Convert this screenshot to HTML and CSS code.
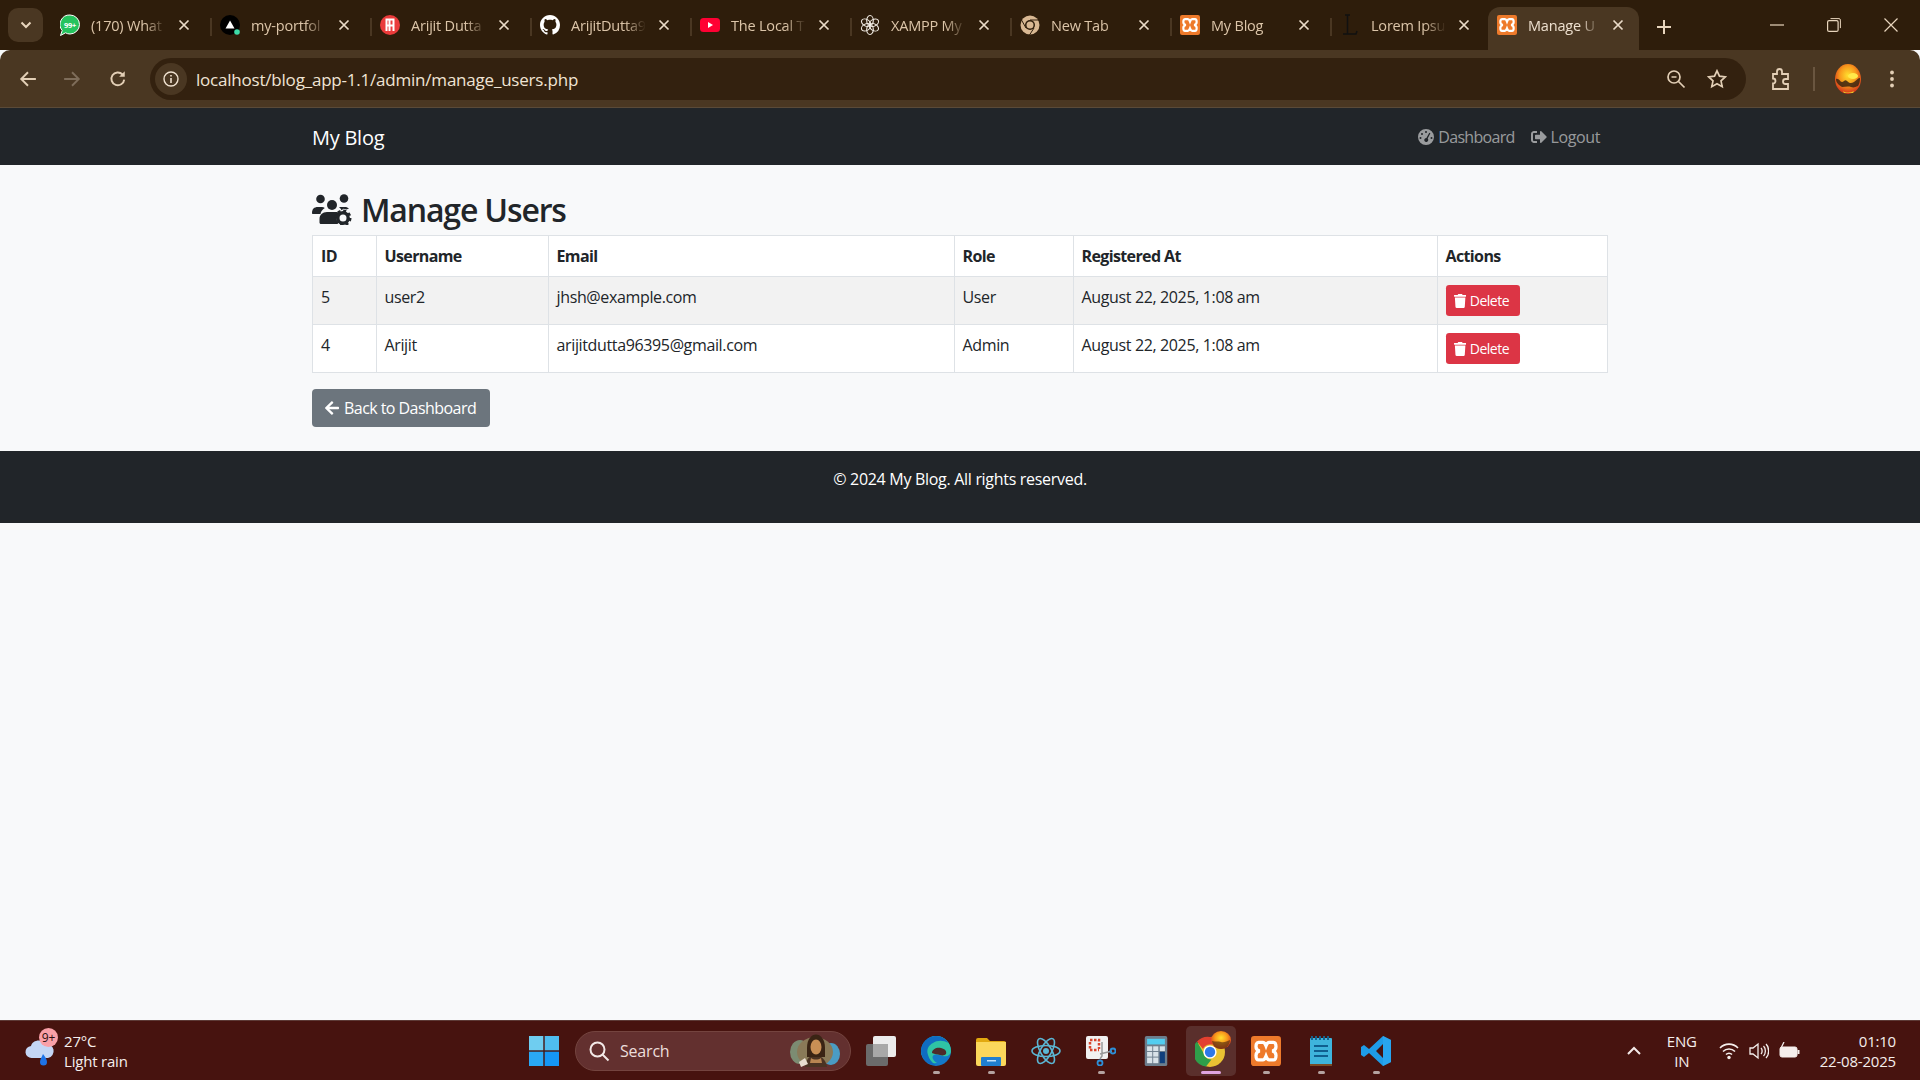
FILE: index.html
```html
<!DOCTYPE html>
<html lang="en">
<head>
<meta charset="utf-8">
<title>Manage Users</title>
<link rel="stylesheet" href="styles.css">
</head>
<body>
<svg class="defs" width="0" height="0">
  <defs>
    <symbol id="x" viewBox="0 0 12 12"><path d="M1.500 1.500l9 9M10.500 1.500l-9 9" stroke="currentColor" stroke-width="1.700" fill="none"/></symbol>
    <symbol id="xampp" viewBox="0 0 24 24"><rect width="24" height="24" rx="2.500" fill="#ee7a2b"/><path d="M6 5h3.500c1.500 0 1.800 1.200 2.500 3 .7-1.800 1-3 2.500-3H18c1.800 0 2 2 2 3.500 0 2-1 3-3 3.500 2 .5 3 1.500 3 3.500 0 1.500-.2 3.500-2 3.500h-3.500c-1.500 0-1.800-1.200-2.500-3-.7 1.800-1 3-2.500 3H6c-1.800 0-2-2-2-3.500 0-2 1-3 3-3.500-2-.5-3-1.500-3-3.500C4 7 4.200 5 6 5z" fill="none" stroke="#fff" stroke-width="2.600"/></symbol>
    <symbol id="trash" viewBox="0 0 448 512"><path fill="currentColor" d="M432 32H312l-9.400-18.700A24 24 0 0 0 281.100 0H166.800a23.720 23.720 0 0 0-21.400 13.300L136 32H16A16 16 0 0 0 0 48v32a16 16 0 0 0 16 16h416a16 16 0 0 0 16-16V48a16 16 0 0 0-16-16zM53.200 467a48 48 0 0 0 47.900 45h245.800a48 48 0 0 0 47.900-45L416 128H32z"/></symbol>
    <radialGradient id="sun" cx="50%" cy="38%" r="62%"><stop offset="0" stop-color="#ffe02e"/><stop offset=".5" stop-color="#f89a1c"/><stop offset="1" stop-color="#d2301a"/></radialGradient>
    <symbol id="avatar" viewBox="0 0 26 30"><ellipse cx="13" cy="15" rx="13" ry="15" fill="url(#sun)"/><path d="M1 15c3-1 4 3 6 3s3-3 5-1 4 3 7 1 4-4 6-4c0 3-.5 6-2 8-3 1-4 2-7 1s-6 0-9 0c-3-2-6-4-6-8z" fill="#3c2410" opacity=".85"/><path d="M8 27c3 2 7 2 11 0l-1 2H9z" fill="#e6c52a"/><ellipse cx="18" cy="12" rx="5" ry="3" fill="#ffe94a"/></symbol>
  </defs>
</svg>

<div class="chrome">
  <div class="tabstrip">
    <button class="tab-search" type="button" aria-label="Search tabs">
      <svg width="12" height="8" viewBox="0 0 12 8"><path d="M1.500 1.500L6 6l4.500-4.500" stroke="#e8d5bd" stroke-width="2" fill="none"/></svg>
    </button>
    <div class="tab">
      <svg class="fav" viewBox="0 0 20 24"><path d="M10 2a9.500 9.500 0 0 1 0 19c-1.700 0-3-.4-4.500-1.200L.5 22.500l1.700-5A9.500 9.500 0 0 1 10 2z" fill="#25c35e" stroke="#fff" stroke-width="1"/><text x="10" y="14.500" class="fav-text">99+</text></svg>
      <span class="title">(170) What</span><svg class="close"><use href="#x"/></svg>
    </div>
    <div class="tab">
      <svg class="fav" viewBox="0 0 20 20"><circle cx="10" cy="10" r="10" fill="#000"/><path d="M10 5.500l4.500 8h-9z" fill="#fff"/><circle cx="17" cy="17" r="2.800" fill="#3ddba8"/></svg>
      <span class="title">my-portfol</span><svg class="close"><use href="#x"/></svg>
    </div>
    <div class="tab">
      <svg class="fav" viewBox="0 0 20 20"><circle cx="10" cy="10" r="10" fill="#ea3b3b"/><path d="M6.500 16V4.500h7V16M6.500 10.500h7M9.500 4.500V16" stroke="#fff" stroke-width="2" fill="none"/></svg>
      <span class="title">Arijit Dutta</span><svg class="close"><use href="#x"/></svg>
    </div>
    <div class="tab">
      <svg class="fav" viewBox="0 0 16 16"><path fill="#fff" d="M8 0C3.580 0 0 3.580 0 8c0 3.540 2.290 6.530 5.470 7.590.4.070.55-.17.55-.38 0-.19-.01-.82-.01-1.490-2.010.37-2.530-.49-2.690-.94-.09-.23-.48-.94-.82-1.130-.28-.15-.68-.52-.01-.53.63-.01 1.080.58 1.230.82.720 1.210 1.870.87 2.330.66.070-.52.280-.87.510-1.070-1.780-.2-3.640-.89-3.640-3.950 0-.87.310-1.590.82-2.150-.08-.2-.36-1.020.08-2.120 0 0 .67-.21 2.200.82.640-.18 1.320-.27 2-.27s1.360.09 2 .27c1.530-1.040 2.200-.82 2.200-.82.440 1.100.16 1.920.08 2.120.51.560.82 1.270.82 2.150 0 3.070-1.870 3.750-3.650 3.950.29.250.54.730.54 1.480 0 1.070-.01 1.930-.01 2.200 0 .21.150.46.550.38A8.010 8.010 0 0 0 16 8c0-4.420-3.580-8-8-8z"/></svg>
      <span class="title">ArijitDutta9</span><svg class="close"><use href="#x"/></svg>
    </div>
    <div class="tab">
      <svg class="fav" viewBox="0 0 20 20"><rect y="3" width="20" height="14" rx="3.500" fill="#ff0033"/><path d="M8 7l5 3-5 3z" fill="#fff"/></svg>
      <span class="title">The Local T</span><svg class="close"><use href="#x"/></svg>
    </div>
    <div class="tab">
      <svg class="fav" viewBox="0 0 20 20"><g fill="none" stroke="#f2ece4" stroke-width="1.100"><ellipse cx="10" cy="5.500" rx="3.300" ry="5"/><ellipse cx="10" cy="5.500" rx="3.300" ry="5" transform="rotate(60 10 10)"/><ellipse cx="10" cy="5.500" rx="3.300" ry="5" transform="rotate(120 10 10)"/><ellipse cx="10" cy="5.500" rx="3.300" ry="5" transform="rotate(180 10 10)"/><ellipse cx="10" cy="5.500" rx="3.300" ry="5" transform="rotate(240 10 10)"/><ellipse cx="10" cy="5.500" rx="3.300" ry="5" transform="rotate(300 10 10)"/></g></svg>
      <span class="title">XAMPP My</span><svg class="close"><use href="#x"/></svg>
    </div>
    <div class="tab">
      <svg class="fav" viewBox="0 0 20 20"><circle cx="10" cy="10" r="9.500" fill="#d9b893"/><circle cx="10" cy="10" r="5" fill="#2e1d0b"/><circle cx="10" cy="10" r="3.500" fill="#d9b893"/><path d="M10 5h9M6 13L1.500 5M14 13l-4.500 7" stroke="#2e1d0b" stroke-width="1"/></svg>
      <span class="title">New Tab</span><svg class="close"><use href="#x"/></svg>
    </div>
    <div class="tab">
      <svg class="fav"><use href="#xampp"/></svg>
      <span class="title">My Blog</span><svg class="close"><use href="#x"/></svg>
    </div>
    <div class="tab tab-last">
      <svg class="fav" viewBox="0 0 20 24"><path d="M5 2h5M7.500 2v19M3 21h13l1-3" stroke="#111" stroke-width="1.500" fill="none"/></svg>
      <span class="title">Lorem Ipsu</span><svg class="close"><use href="#x"/></svg>
    </div>
    <div class="tab tab-active">
      <svg class="fav"><use href="#xampp"/></svg>
      <span class="title">Manage U</span><svg class="close"><use href="#x"/></svg>
    </div>
    <button class="new-tab" type="button" aria-label="New tab">
      <svg width="14" height="14" viewBox="0 0 14 14"><path d="M7 0v14M0 7h14" stroke="#e8d5bd" stroke-width="2"/></svg>
    </button>
    <div class="win-controls">
      <svg width="14" height="14" viewBox="0 0 14 14"><path d="M0 7h14" stroke="#e8d5bd" stroke-width="1.200"/></svg>
      <svg width="14" height="14" viewBox="0 0 14 14"><rect x=".6" y="2.600" width="10.500" height="10.800" rx="1.500" fill="none" stroke="#e8d5bd" stroke-width="1.200"/><path d="M3.500.6h8.500a1.500 1.500 0 0 1 1.400 1.500v8" fill="none" stroke="#e8d5bd"/></svg>
      <svg width="14" height="14" viewBox="0 0 14 14"><path d="M.5.5l13 13M13.500.5l-13 13" stroke="#e8d5bd" stroke-width="1.200"/></svg>
    </div>
  </div>
  <div class="toolbar">
    <svg class="tool tool-back" viewBox="0 0 16 16"><path d="M15 8H2M8 2L2 8l6 6" stroke="#e3cfb6" stroke-width="1.700" fill="none"/></svg>
    <svg class="tool tool-forward" viewBox="0 0 16 16"><path d="M1 8h13M8 2l6 6-6 6" stroke="#7e6d5a" stroke-width="1.700" fill="none"/></svg>
    <svg class="tool tool-reload" viewBox="0 0 16 16"><path d="M13.500 8.500A5.700 5.700 0 1 1 12 4" stroke="#e3cfb6" stroke-width="1.700" fill="none"/><path d="M14 1v5H9z" fill="#e3cfb6"/></svg>
    <div class="omnibox">
      <span class="info"><svg width="16" height="16" viewBox="0 0 16 16"><circle cx="8" cy="8" r="7" stroke="#f0e2d0" stroke-width="1.400" fill="none"/><path d="M8 7v5M8 4v1.600" stroke="#f0e2d0" stroke-width="1.600"/></svg></span>
      <span class="url">localhost/blog_app-1.1/admin/manage_users.php</span>
      <svg class="omni-icon" viewBox="0 0 20 20"><circle cx="8" cy="8" r="6" stroke="#e3cfb6" stroke-width="1.700" fill="none"/><path d="M5.500 8h5M12.500 12.500l6 6" stroke="#e3cfb6" stroke-width="1.700"/></svg>
      <svg class="omni-icon" viewBox="0 0 20 20"><path d="M10 1.800l2.500 5.400 5.800.7-4.300 4 1.200 5.800-5.200-2.900-5.200 2.900L6 11.900l-4.300-4 5.800-.7z" stroke="#e3cfb6" stroke-width="1.700" fill="none"/></svg>
    </div>
    <svg class="ext" viewBox="0 0 20 22"><path d="M2 6h4V3.500a2.500 2.500 0 0 1 5 0V6h6v5h-2.500a2.500 2.500 0 0 0 0 5H17v5H2v-5.500a2.500 2.500 0 0 0 0-5z" stroke="#e3cfb6" stroke-width="1.800" fill="none"/></svg>
    <span class="tool-sep"></span>
    <svg class="avatar"><use href="#avatar"/></svg>
    <svg class="kebab" viewBox="0 0 4 18"><circle cx="2" cy="2.500" r="1.900" fill="#e3cfb6"/><circle cx="2" cy="9" r="1.900" fill="#e3cfb6"/><circle cx="2" cy="15.500" r="1.900" fill="#e3cfb6"/></svg>
  </div>
</div>

<div class="page">
  <nav class="navbar">
    <div class="container navbar-inner">
      <a class="brand">My Blog</a>
      <div class="nav-links">
        <a class="nav-link nav-dash">
          <svg class="nav-icon" viewBox="0 0 16 16"><path fill-rule="evenodd" fill="currentColor" d="M8 0a8 8 0 1 0 0 16A8 8 0 0 0 8 0zM8 2a1 1 0 1 1 0 2 1 1 0 0 1 0-2zM4 4a1 1 0 1 1 0 2 1 1 0 0 1 0-2zM11.300 3.700l1.100.6-2.700 5.300a2 2 0 1 1-1.300-.6zM2.500 8a1 1 0 1 1 0 2 1 1 0 0 1 0-2zM13.500 8a1 1 0 1 1 0 2 1 1 0 0 1 0-2z"/></svg>
          Dashboard</a>
        <a class="nav-link nav-logout">
          <svg class="nav-icon" viewBox="0 0 512 512"><path fill="currentColor" d="M497 273L329 441c-15 15-41 4.500-41-17v-96H152c-13.300 0-24-10.700-24-24v-96c0-13.300 10.700-24 24-24h136V88c0-21.400 25.900-32 41-17l168 168c9.300 9.400 9.300 24.600 0 34zM192 436v-40c0-6.600-5.400-12-12-12H96c-17.700 0-32-14.300-32-32V160c0-17.700 14.300-32 32-32h84c6.600 0 12-5.400 12-12V76c0-6.600-5.400-12-12-12H96c-53 0-96 43-96 96v192c0 53 43 96 96 96h84c6.600 0 12-5.400 12-12z"/></svg>
          Logout</a>
      </div>
    </div>
  </nav>

  <main class="container main">
    <h2 class="heading">
      <svg class="heading-icon" viewBox="0 0 40 32">
        <circle cx="8.500" cy="6" r="4.300" fill="#212529"/><circle cx="32" cy="5.500" r="4.300" fill="#212529"/><circle cx="20" cy="12" r="5" fill="#212529"/>
        <path d="M0 20c0-4 2-6 6-6h4c1 0 2 .4 2.800 1-2.500 1.500-4 3.500-4.300 6H1c-.6 0-1-.4-1-1z" fill="#212529"/>
        <path d="M15 19h9c1.500 0 3 .5 3.500 1.500-3 2.500-3.500 6.500-1.500 10.500H9c-1 0-1.500-.6-1.500-1.500V26c0-4 3-7 7.500-7z" fill="#212529"/>
        <path d="M27 14h6c1.500 0 3 .6 4 1.500l-2.500 1-3 -.8-2 1.500c-.5-1.200-1.500-2.500-2.500-3.200z" fill="#212529"/>
        <circle cx="31" cy="25" r="5.200" fill="none" stroke="#212529" stroke-width="3.400"/>
        <circle cx="31" cy="25" r="7.300" fill="none" stroke="#212529" stroke-width="2.400" stroke-dasharray="3 2.730"/>
      </svg>
      <span class="heading-text">Manage Users</span>
    </h2>
    <table class="table">
      <thead>
        <tr>
          <th class="col-id">ID</th>
          <th class="col-user">Username</th>
          <th class="col-email">Email</th>
          <th class="col-role">Role</th>
          <th class="col-date">Registered At</th>
          <th>Actions</th>
        </tr>
      </thead>
      <tbody>
        <tr class="striped">
          <td>5</td><td>user2</td><td>jhsh@example.com</td><td>User</td><td>August 22, 2025, 1:08 am</td>
          <td><a class="btn-danger"><svg class="btn-icon"><use href="#trash"/></svg>Delete</a></td>
        </tr>
        <tr>
          <td>4</td><td>Arijit</td><td>arijitdutta96395@gmail.com</td><td>Admin</td><td>August 22, 2025, 1:08 am</td>
          <td><a class="btn-danger"><svg class="btn-icon"><use href="#trash"/></svg>Delete</a></td>
        </tr>
      </tbody>
    </table>
    <a class="btn-secondary">
      <svg class="back-icon" viewBox="0 0 448 512"><path fill="currentColor" d="M257.500 445.100l-22.200 22.200c-9.400 9.400-24.600 9.400-33.900 0L7 273c-9.400-9.400-9.400-24.600 0-33.900L201.400 44.700c9.400-9.400 24.600-9.400 33.900 0l22.200 22.200c9.500 9.500 9.300 25-.4 34.300L136.600 216H424c13.300 0 24 10.700 24 24v32c0 13.300-10.700 24-24 24H136.600l120.500 114.800c9.800 9.300 10 24.800.4 34.300z"/></svg>
      Back to Dashboard
    </a>
  </main>

  <footer class="footer">© 2024 My Blog. All rights reserved.</footer>
</div>

<div class="taskbar">
  <div class="weather">
    <span class="weather-icon">
      <svg width="32" height="34" viewBox="0 0 32 34"><path d="M8 24a6 6 0 0 1-1-12c1-6 11-8 14-2a6.500 6.500 0 0 1 3 14z" fill="#c4d6f5"/><path d="M19 20c2 3 4 5 4 8a3.500 3.500 0 0 1-7 0c0-3 2-5 3-8z" fill="#1e73e8"/></svg>
      <span class="badge">9+</span>
    </span>
    <div class="weather-text"><span>27°C</span><span>Light rain</span></div>
  </div>
  <div class="task-center">
    <svg class="start" viewBox="0 0 30 30"><rect width="14.300" height="14.300" fill="#6fcdf0"/><rect x="15.700" width="14.300" height="14.300" fill="#4fbdf0"/><rect y="15.700" width="14.300" height="14.300" fill="#2aa8f5"/><rect x="15.700" y="15.700" width="14.300" height="14.300" fill="#1596f5"/></svg>
    <div class="search">
      <svg width="22" height="22" viewBox="0 0 22 22"><circle cx="9.500" cy="9.500" r="7" stroke="#f3e9e7" stroke-width="2" fill="none"/><path d="M14.500 14.500l6 6" stroke="#f3e9e7" stroke-width="2"/></svg>
      <span class="search-label">Search</span>
      <svg class="search-art" width="50" height="33" viewBox="0 0 50 33"><ellipse cx="10" cy="18" rx="10" ry="12" fill="#7c8c72"/><ellipse cx="41" cy="20" rx="9" ry="11" fill="#4a9cc4"/><ellipse cx="25" cy="18" rx="18" ry="15" fill="#8a7a58"/><path d="M15 33c1-8 5-12 10-12s11 4 12 12z" fill="#4b3323"/><path d="M17 14c0-18 18-18 18 0v9H17z" fill="#3a2414"/><ellipse cx="26" cy="13" rx="5.500" ry="7.500" fill="#c98f55"/><path d="M21 24c3 2 7 2 10 0l1 5H20z" fill="#b98552"/><path d="M9 28l6-4 3 6-7 3z" fill="#e9ddd0"/></svg>
    </div>
    <div class="apps">
      <span class="app"><svg viewBox="0 0 30 30"><rect y="8" width="22" height="22" rx="2" fill="#6b6b6b"/><rect x="7" width="23" height="21" rx="2" fill="#ececec"/><rect x="7" y="8" width="15" height="13" fill="#a8a8a8"/></svg></span>
      <span class="app app-open"><svg viewBox="0 0 30 30"><circle cx="15" cy="15" r="15" fill="#1379c9"/><path d="M15 0a15 15 0 0 1 15 15c0 4-4 6-8 5-3-.8-7-2-9-1-3 1-1 6 3 8-7 1-15-3-16-11C1 8 7 0 15 0z" fill="#2fc3a5"/><path d="M0 15C0 7 7 0 15 0c6 0 10 3 12 7-4-3-11-3-15 0-4 2-7 6-5 12 1 4 4 8 8 10C7 29 0 23 0 15z" fill="#0f6cc2"/><path d="M11 17c0-4 5-6 9-5 4 1 6 3 5 6-1 1-3 2-6 1-3-.5-5-1-8-2z" fill="#4e2b2a"/></svg></span>
      <span class="app app-open"><svg viewBox="0 0 30 30"><path d="M0 4a2 2 0 0 1 2-2h9l3 3h14a2 2 0 0 1 2 2v4H0z" fill="#e2a90f"/><path d="M0 6h30v22a2 2 0 0 1-2 2H2a2 2 0 0 1-2-2z" fill="#fbd75b"/><rect x="5" y="21" width="20" height="9" rx="1" fill="#1f7fd0"/><rect x="11" y="24" width="9" height="1.500" fill="#bfe0fa"/></svg></span>
      <span class="app"><svg viewBox="0 0 30 30"><g fill="none" stroke="#5bb6d4" stroke-width="1.600"><ellipse cx="15" cy="15" rx="14" ry="5.500"/><ellipse cx="15" cy="15" rx="14" ry="5.500" transform="rotate(60 15 15)"/><ellipse cx="15" cy="15" rx="14" ry="5.500" transform="rotate(120 15 15)"/></g><circle cx="15" cy="15" r="3" fill="#5bb6d4"/></svg></span>
      <span class="app app-open"><svg viewBox="0 0 30 30"><rect width="22" height="23" rx="2" fill="#f1f1f1"/><path d="M4 4h9v9" fill="none" stroke="#d9452c" stroke-width="2.500" stroke-dasharray="2.500 1.500"/><path d="M4 6v8h9" fill="none" stroke="#d9452c" stroke-width="2.500" stroke-dasharray="2.500 1.500"/><path d="M16 6v14l-2 3M14 18l12-3" stroke="#9a9a9a" stroke-width="1.500" fill="none"/><circle cx="14" cy="27" r="2.500" fill="none" stroke="#2d8fd8" stroke-width="1.800"/><circle cx="27" cy="15" r="2.500" fill="none" stroke="#2d8fd8" stroke-width="1.800"/></svg></span>
      <span class="app"><svg viewBox="0 0 24 32"><rect width="24" height="32" rx="2" fill="#6c7d8c"/><rect x="2.500" y="3" width="19" height="6" fill="#52cdf0"/><g fill="#d8e2e8"><rect x="2.500" y="11" width="5.500" height="5"/><rect x="9" y="11" width="5.500" height="5"/><rect x="16" y="11" width="5.500" height="5"/><rect x="2.500" y="17" width="5.500" height="5"/><rect x="9" y="17" width="5.500" height="5"/><rect x="2.500" y="23" width="5.500" height="6"/><rect x="9" y="23" width="5.500" height="6"/></g><rect x="16" y="17" width="5.500" height="12" fill="#103f7c"/></svg></span>
      <span class="app app-active"><svg class="chrome-logo" viewBox="0 0 36 36"><circle cx="15" cy="21" r="15" fill="#e9c233"/><path d="M15 6a15 15 0 0 1 13 7.500H15a7.500 7.500 0 0 0-7 4.500L2 10.500A15 15 0 0 1 15 6z" fill="#e2402f"/><path d="M2 10.500L8.500 22a7.500 7.500 0 0 0 8 6.500L11 35.500A15 15 0 0 1 2 10.500z" fill="#2f9e4a"/><circle cx="15" cy="21" r="6.600" fill="#fff"/><circle cx="15" cy="21" r="5.200" fill="#2f78e8"/><ellipse cx="26" cy="9" rx="10" ry="9" fill="url(#sun)"/><path d="M17 10c4 1 6 0 9 1s6-1 9-2c0 4-3 9-9 9s-8-4-9-8z" fill="#5b3410" opacity=".7"/></svg></span>
      <span class="app app-open"><svg><use href="#xampp"/></svg></span>
      <span class="app app-open"><svg viewBox="0 0 22 30"><rect y="2" width="22" height="27" rx="1" fill="#3eb4dc"/><rect y="28" width="22" height="2" fill="#7a4b25"/><path d="M2 0v4M6 0v4M10 0v4M14 0v4M18 0v4" stroke="#16628c" stroke-width="2"/><path d="M4 10h14M4 15h14M4 20h14" stroke="#0f5f8f" stroke-width="2"/></svg></span>
      <span class="app app-open"><svg viewBox="0 0 30 30"><path d="M22 0l8 4v22l-8 4L8 17l-5 4-3-2V11l3-2 5 4zM22 8l-7 7 7 7z" fill="#1e9ce8"/><path d="M22 0l8 4v22l-8 4z" fill="#2aa8f0" opacity=".8"/></svg></span>
    </div>
  </div>
  <div class="tray">
    <svg class="tray-chevron" width="14" height="9" viewBox="0 0 14 9"><path d="M1 8l6-6 6 6" stroke="#f3e9e7" stroke-width="2" fill="none"/></svg>
    <div class="lang"><span>ENG</span><span>IN</span></div>
    <svg width="20" height="18" viewBox="0 0 20 18"><g fill="none" stroke="#f5eeec" stroke-width="1.600"><path d="M1 6a12.500 12.500 0 0 1 18 0"/><path d="M4 9.500a8.500 8.500 0 0 1 12 0"/><path d="M7 12.500a4.200 4.200 0 0 1 6 0"/></g><circle cx="10" cy="15.500" r="1.700" fill="#f5eeec"/></svg>
    <svg width="20" height="18" viewBox="0 0 20 18"><path d="M1 6h3l5-4v14l-5-4H1z" fill="none" stroke="#f5eeec" stroke-width="1.300"/><path d="M12 6c1.500 1.500 1.500 4.500 0 6M14.500 4c2.500 2.500 2.500 7.500 0 10M17 2c3.500 3.500 3.500 10.500 0 14" fill="none" stroke="#f5eeec" stroke-width="1.300"/></svg>
    <svg width="21" height="18" viewBox="0 0 21 18"><rect x="1" y="5" width="17" height="10" rx="2" fill="#f5eeec" stroke="#f5eeec"/><rect x="18.500" y="8" width="2" height="4" fill="#f5eeec"/><path d="M5 0L2 6h3L3 11" stroke="#f5eeec" stroke-width="1.300" fill="none"/></svg>
    <div class="clock"><span>01:10</span><span>22-08-2025</span></div>
  </div>
</div>
</body>
</html>
```

FILE: styles.css
```css
* { box-sizing: border-box; }
html, body { margin: 0; height: 100%; }
body {
  display: flex;
  flex-direction: column;
  height: 1080px;
  overflow: hidden;
  font-family: "Open Sans", "Noto Sans", sans-serif;
  font-size: 16px;
  color: #212529;
  background: #f8f9fa;
}
.defs { position: absolute; }

/* browser chrome */
.chrome { flex: none; }
.tabstrip {
  height: 50px;
  background: #2e1d0b;
  display: flex;
  align-items: flex-end;
  padding-left: 8px;
  color: #dcc5a9;
  font-size: 14.5px;
  letter-spacing: -.2px;
}
.tab-search {
  width: 35px;
  height: 34px;
  margin: 0 9px 8px 0;
  border: 0;
  border-radius: 10px;
  background: #4a3722;
  display: flex;
  align-items: center;
  justify-content: center;
  padding: 0;
}
.tab {
  width: 160px;
  height: 43px;
  padding: 0 22px 7px 8px;
  display: flex;
  align-items: center;
  position: relative;
}
.tab::after {
  content: "";
  position: absolute;
  right: 0;
  top: 11px;
  width: 2px;
  height: 18px;
  background: #4a3722;
}
.tab-last::after, .tab-active::after { display: none; }
.tab-active {
  width: 151px;
  margin-left: -4px;
  padding: 0 15px 7px 9px;
  background: #4a3722;
  border-radius: 12px 12px 0 0;
  color: #eee0cf;
}
.fav { width: 20px; height: 24px; flex: none; }
.fav-text { font-size: 7.500px; font-weight: 700; fill: #fff; text-anchor: middle; letter-spacing: -.3px; }
.title {
  flex: 1;
  min-width: 0;
  margin-left: 11px;
  white-space: nowrap;
  -webkit-mask-image: linear-gradient(90deg, #000 72%, transparent 100%);
  mask-image: linear-gradient(90deg, #000 72%, transparent 100%);
}
.close { width: 12px; height: 12px; flex: none; margin-left: 12px; color: #eadbc8; }
.new-tab {
  width: 14px;
  height: 14px;
  margin: 0 0 16px 18px;
  padding: 0;
  border: 0;
  background: none;
  display: flex;
}
.win-controls {
  margin-left: auto;
  width: 150px;
  padding-right: 22px;
  height: 50px;
  padding-bottom: 18px;
  display: flex;
  align-items: flex-end;
  justify-content: space-between;
}
.toolbar {
  height: 58px;
  background: #4a3722;
  border-bottom: 1px solid #5a4a38;
  padding: 8px 0 7px 19px;
  display: flex;
  align-items: center;
  border-radius: 10px 10px 0 0;
}
.tool { width: 18px; height: 18px; flex: none; }
.tool-back { margin-right: 26px; }
.tool-forward { margin-right: 28px; }
.tool-reload { margin-right: 23px; }
.omnibox {
  width: 1596px;
  height: 42px;
  background: #33210f;
  border-radius: 21px;
  display: flex;
  align-items: center;
  padding: 0 19px 0 5px;
  color: #f0e4d4;
}
.info {
  width: 32px;
  height: 32px;
  border-radius: 50%;
  background: #4a3722;
  display: flex;
  align-items: center;
  justify-content: center;
  flex: none;
}
.url { flex: 1; margin-left: 9px; font-size: 17px; letter-spacing: -.21px; }
.omni-icon { width: 20px; height: 20px; margin-left: 21px; }
.ext { width: 20px; height: 22px; margin-left: 25px; flex: none; }
.tool-sep { width: 2px; height: 24px; background: #6a5640; margin-left: 22px; flex: none; }
.avatar { width: 26px; height: 30px; margin-left: 20px; flex: none; }
.kebab { width: 4px; height: 18px; margin-left: 29px; flex: none; }

/* page */
.page { flex: 1; min-height: 0; }
.container { width: 1296px; margin: 0 auto; }
.navbar { height: 57px; background: #212529; }
.navbar-inner { height: 100%; display: flex; align-items: center; justify-content: space-between; }
.brand { color: #fff; font-size: 20px; letter-spacing: -.25px; padding-top: 2px; }
.nav-links { display: flex; }
.nav-link {
  display: flex;
  align-items: center;
  padding: 8px;
  color: rgba(255, 255, 255, .55);
}
.nav-dash { letter-spacing: -.7px; }
.nav-logout { letter-spacing: -.4px; }
.nav-icon { width: 16px; height: 16px; margin-right: 4px; }
.main { padding-top: 24px; }
.heading {
  margin: 0 0 8px;
  height: 38.4px;
  font-size: 32px;
  font-weight: 600;
  line-height: 38.4px;
  letter-spacing: -1.15px;
  display: flex;
  align-items: flex-start;
}
.heading-icon { width: 40px; height: 32px; margin: 4px 9px 0 0; flex: none; }
.heading-text { margin-top: 2px; }
.table {
  width: 100%;
  border-collapse: collapse;
  table-layout: fixed;
  background: #fff;
  margin-bottom: 16px;
}
.table th, .table td {
  border: 1px solid #dee2e6;
  padding: 8px;
  text-align: left;
  vertical-align: top;
  line-height: 24px;
  letter-spacing: -.36px;
}
.table th { font-weight: 700; letter-spacing: -.62px; }
.col-id { width: 63.5px; }
.col-user { width: 172px; }
.col-email { width: 406px; }
.col-role { width: 119px; }
.col-date { width: 364px; }
.striped td { background: #f2f2f2; }
.table .btn-danger {
  display: inline-flex;
  align-items: center;
  height: 31px;
  width: 74px;
  padding: 0 8px;
  background: #dc3545;
  color: #fff;
  font-size: 14px;
  line-height: 21px;
  border-radius: 3.2px;
  letter-spacing: -.5px;
}
.btn-icon { width: 12.25px; height: 14px; margin-right: 4px; flex: none; }
.btn-secondary {
  display: inline-flex;
  align-items: center;
  height: 38px;
  width: 178px;
  padding: 0 13px;
  background: #6c757d;
  color: #fff;
  border-radius: 4px;
  letter-spacing: -.55px;
}
.back-icon { width: 14px; height: 16px; margin-right: 5px; flex: none; }
.footer {
  margin-top: 24px;
  height: 72px;
  padding-top: 16px;
  background: #212529;
  color: #fff;
  text-align: center;
  line-height: 24px;
  letter-spacing: -.3px;
}

/* taskbar */
.taskbar {
  flex: none;
  height: 60px;
  background: #47130f;
  border-top: 1px solid #5d3a36;
  color: #f5eeec;
  display: grid;
  grid-template-columns: 1fr auto 1fr;
  align-items: center;
  font-size: 15px;
  letter-spacing: -.2px;
}
.weather { display: flex; align-items: center; padding-left: 24px; }
.weather-icon { width: 32px; height: 34px; position: relative; display: block; }
.badge {
  position: absolute;
  left: 15px;
  top: -6px;
  width: 19px;
  height: 19px;
  border-radius: 50%;
  background: #f9a0a8;
  color: #2a0f10;
  font-size: 12px;
  line-height: 19px;
  text-align: center;
}
.weather-text { display: flex; flex-direction: column; margin-left: 8px; line-height: 20px; }
.task-center { display: flex; align-items: center; }
.start { width: 30px; height: 30px; flex: none; }
.search {
  width: 276px;
  height: 40px;
  margin-left: 16px;
  border-radius: 20px;
  background: #63302f;
  border: 1px solid #74443f;
  display: flex;
  align-items: center;
  padding: 0 10px 0 12px;
  font-size: 16px;
}
.search-label { flex: 1; margin-left: 10px; color: #ecdedc; }
.apps { display: flex; margin: 0 -10px 0 5px; }
.app {
  width: 50px;
  height: 50px;
  margin-right: 5px;
  border-radius: 5px;
  display: flex;
  align-items: center;
  justify-content: center;
  position: relative;
}
.app:last-child { margin-right: 0; }
.app svg { width: 30px; height: 30px; }
.app-open::after, .app-active::after {
  content: "";
  position: absolute;
  bottom: 2px;
  left: 50%;
  width: 7px;
  height: 3px;
  margin-left: -3.5px;
  border-radius: 2px;
  background: #b5a3a1;
}
.app-active { background: #5a2f2c; }
.app-active::after { width: 20px; margin-left: -10px; background: #e0a4e0; }
.app .chrome-logo { width: 36px; height: 36px; margin-top: -4px; margin-left: 4px; }
.tray { display: flex; align-items: center; justify-content: flex-end; padding-right: 24px; }
.tray > svg { margin-left: 10px; flex: none; }
.tray-chevron { margin-right: 26px; }
.lang, .clock { display: flex; flex-direction: column; line-height: 20px; }
.lang { align-items: center; margin-right: 12px; }
.clock { align-items: flex-end; margin-left: 20px; }
```
